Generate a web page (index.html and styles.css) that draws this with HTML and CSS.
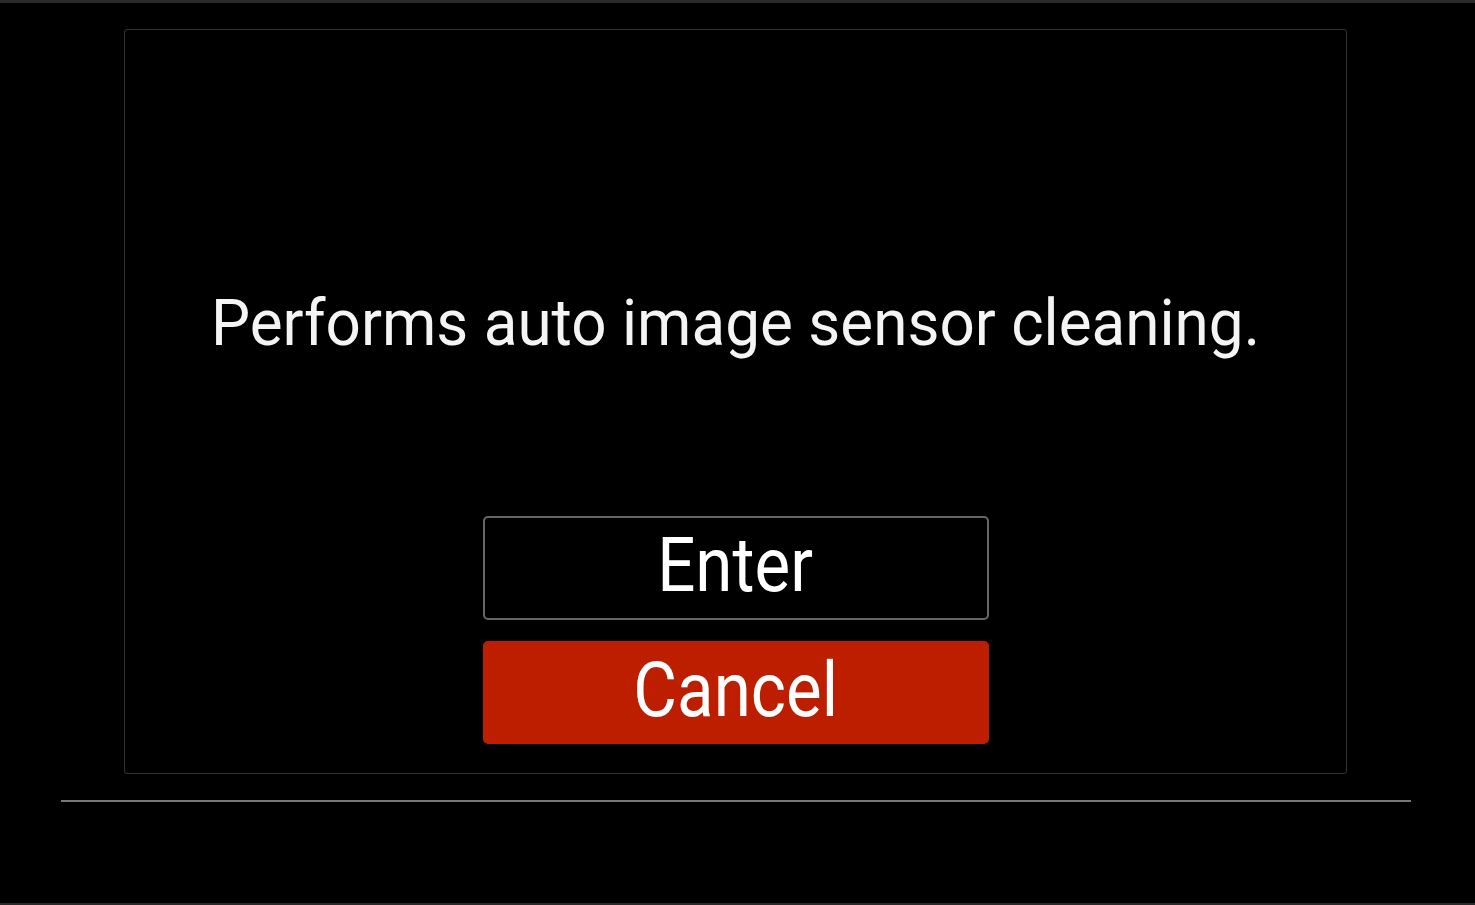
FILE: index.html
```html
<!DOCTYPE html>
<html lang="en">
<head>
<meta charset="utf-8">
<title>Sensor cleaning</title>
<link rel="stylesheet" href="styles.css">
</head>
<body>
<div class="screen">
  <div class="topbar"></div>
  <div class="panel">
    <p class="message">Performs auto image sensor cleaning.</p>
    <div class="buttons">
      <div class="btn btn-enter"><span class="label">Enter</span></div>
      <div class="btn btn-cancel"><span class="label">Cancel</span></div>
    </div>
  </div>
  <div class="divider"></div>
  <div class="spacer"></div>
  <div class="bottombar"></div>
</div>
</body>
</html>
```
FILE: styles.css
```css
html, body {
  margin: 0;
  padding: 0;
  background: #000;
}
.screen {
  width: 1475px;
  height: 905px;
  display: flex;
  flex-direction: column;
  background: #000;
  font-family: Roboto, "Liberation Sans", sans-serif;
  color: #fff;
  overflow: hidden;
}
.topbar {
  height: 3px;
  background: #2a2a2a;
  flex: none;
}
.panel {
  flex: none;
  box-sizing: border-box;
  width: 1223px;
  height: 745px;
  margin: 26px 0 0 124px;
  border: 1px solid #333;
  border-radius: 3px;
  display: flex;
  flex-direction: column;
  align-items: center;
  padding: 0 0 29px;
}
.message {
  margin: 262px 0 0;
  font-size: 62px;
  line-height: 62px;
  white-space: nowrap;
  color: #f4f4f4;
  transform: scaleY(1.04);
}
.buttons {
  margin-top: auto;
  display: flex;
  flex-direction: column;
  gap: 21px;
}
.btn {
  box-sizing: border-box;
  width: 506px;
  height: 103px;
  border-radius: 5px;
  display: flex;
  align-items: center;
  justify-content: center;
}
.btn-enter {
  border: 2px solid #666;
  height: 104px;
}
.btn-cancel {
  background: #be1e00;
}
.label {
  display: inline-block;
  font-size: 76px;
  line-height: 76px;
  transform: translateY(-3px) scaleX(0.885);
  color: #fff;
}
.divider {
  flex: none;
  height: 2px;
  width: 1350px;
  margin: 26px 0 0 61px;
  background: #777;
}
.spacer {
  flex: 1;
}
.bottombar {
  flex: none;
  height: 2px;
  background: #2a2a2a;
}
```
